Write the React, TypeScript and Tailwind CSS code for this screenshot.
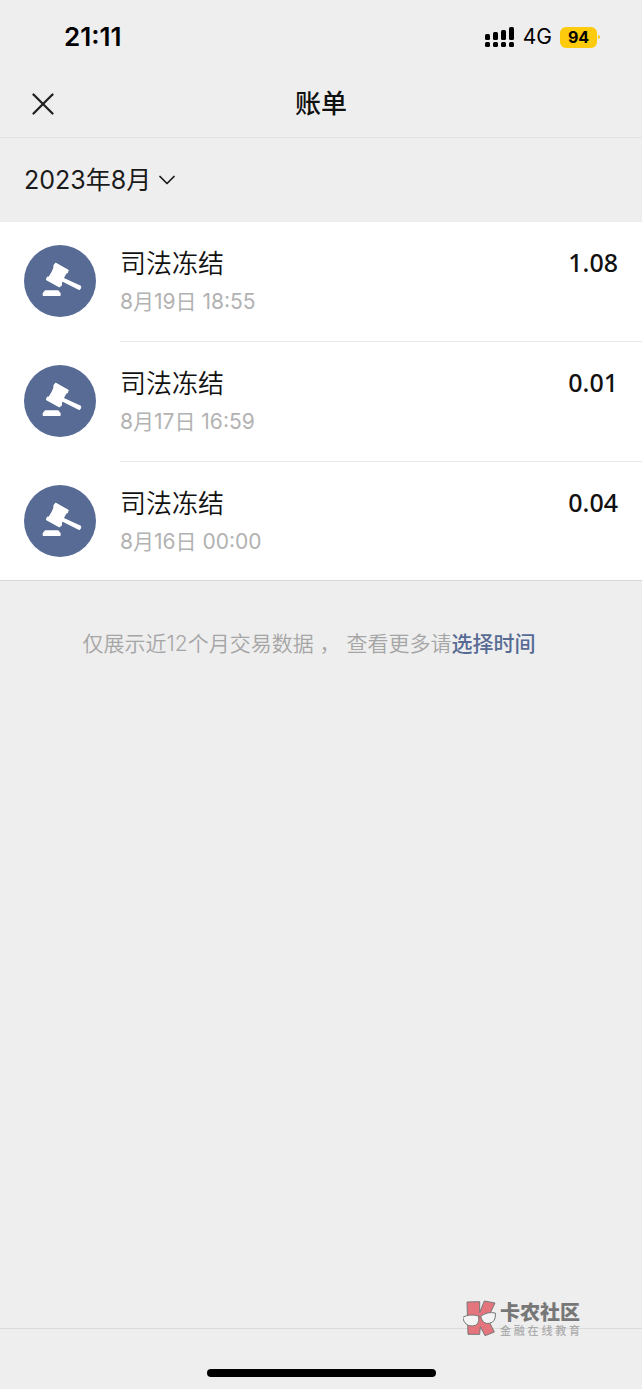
import { ChevronDown, X } from "lucide-react";

type Bill = {
  id: number;
  title: string;
  time: string;
  amount: string;
};

const bills: Bill[] = [
  { id: 1, title: "司法冻结", time: "8月19日 18:55", amount: "1.08" },
  { id: 2, title: "司法冻结", time: "8月17日 16:59", amount: "0.01" },
  { id: 3, title: "司法冻结", time: "8月16日 00:00", amount: "0.04" },
];

function SignalIcon() {
  return (
    <svg viewBox="0 0 30 20" className="h-5 w-[30px]" fill="#000" aria-hidden>
      <rect x="0" y="7" width="5" height="6" rx="1.5" />
      <rect x="8" y="5" width="5" height="8" rx="1.5" />
      <rect x="16" y="3" width="5" height="10" rx="1.5" />
      <rect x="24" y="0" width="5" height="13" rx="1.5" />
      <rect x="0" y="15" width="5" height="5" rx="1.5" />
      <rect x="8" y="15" width="5" height="5" rx="1.5" />
      <rect x="16" y="15" width="5" height="5" rx="1.5" />
      <rect x="24" y="15" width="5" height="5" rx="1.5" />
    </svg>
  );
}

function GavelIcon() {
  return (
    <svg viewBox="12 15 216 216" className="size-[72px] shrink-0" aria-hidden>
      <circle cx="120" cy="123" r="108" fill="#576b95" />
      <g fill="#fff" stroke="#fff" strokeLinejoin="round" strokeWidth="4">
        <path d="M107 70 L144 91 L142 98 L138 99 Q130 112 124 128 L124 135 L118 140 L80 119 L82 112 L88 111 Q97 98 102 84 L102 77 Z" />
        <path d="M131 116 L180 138 Q184 143 178 148 L126 122 Z" />
        <path d="M76 153 H114 L120 160 V166 H70 V160 Z" />
      </g>
    </svg>
  );
}

function StatusBar() {
  return (
    <div className="flex h-[74px] items-center justify-between pr-[42px] pl-16 text-black">
      <span className="text-[26px] leading-8 font-semibold">21:11</span>
      <div className="flex items-center">
        <SignalIcon />
        <span className="ml-2 text-[21px] leading-6">4G</span>
        <span className="ml-2 flex h-[21px] w-[37px] items-center justify-center rounded-md bg-[#fdca0c] text-base font-bold">
          94
        </span>
        <span className="ml-px h-1 w-[2px] rounded-r-full bg-[#fdca0c]" />
      </div>
    </div>
  );
}

function BillRow({ bill }: { bill: Bill }) {
  return (
    <li className="group flex h-[120px] pl-6 last:h-[118px]">
      <div className="pt-[23px]">
        <GavelIcon />
      </div>
      <div className="ml-6 flex flex-1 justify-between border-b border-[#e8e8e8] pt-[22px] pr-6 group-last:border-b-0">
        <div>
          <p className="text-[26px] leading-10 font-[350] text-[#111]">{bill.title}</p>
          <p className="mt-[2px] text-[21px] leading-8 text-[#b2b2b2]">{bill.time}</p>
        </div>
        <span className="font-['Noto_Sans',sans-serif] text-[25px] leading-9 font-medium text-[#111]">
          {bill.amount}
        </span>
      </div>
    </li>
  );
}

function Watermark() {
  return (
    <div className="absolute right-[62px] bottom-[51px] flex items-center">
      <svg viewBox="0 0 108 114" className="h-[38px] w-9" stroke="#777" strokeWidth="3" aria-hidden>
        <path
          d="M12 6 L50 5 L50 38 L64 3 L96 9 L74 56 L94 96 L66 107 L52 80 L50 103 L15 103 Z"
          fill="#e5757d"
          strokeLinejoin="round"
        />
        <path d="M-1 52 Q20 40 47 48 Q51 77 28 78 Q5 79 -1 52 Z" fill="#f4f4f4" />
        <path d="M53 49 Q73 34 97 39 Q100 66 79 70 Q59 74 53 49 Z" fill="#f4f4f4" />
        <path d="M47 51 L53 49" />
      </svg>
      <div className="ml-px">
        <p className="text-xl leading-6 font-black text-[#777]">卡农社区</p>
        <p className="flex justify-between text-[11px] leading-3 font-medium text-[#aaa]">
          {[..."金融在线教育"].map((char) => (
            <span key={char}>{char}</span>
          ))}
        </p>
      </div>
    </div>
  );
}

export default function App() {
  return (
    <div className="relative flex min-h-screen flex-col bg-[#eeeeee] font-[Inter,'Noto_Sans_CJK_SC',sans-serif]">
      <StatusBar />
      <header className="grid h-16 grid-cols-[1fr_auto_1fr] items-center border-b border-[#e2e2e2] px-6 pb-1">
        <button type="button" aria-label="关闭" className="justify-self-start text-[#222]">
          <X size={38} strokeWidth={1.5} />
        </button>
        <h1 className="text-[26px] leading-9 font-medium text-[#111]">账单</h1>
      </header>
      <div className="flex h-[84px] items-center px-6">
        <button type="button" className="flex items-center gap-[2px] text-[25px] leading-9 text-[#1a1a1a]">
          2023年8月
          <ChevronDown size={28} strokeWidth={1.5} />
        </button>
      </div>
      <main className="flex-1">
        <ul className="border-b border-[#d8d8d8] bg-white">
          {bills.map((bill) => (
            <BillRow key={bill.id} bill={bill} />
          ))}
        </ul>
        <p className="mt-[47px] pr-12 pl-6 text-center text-[21px] leading-8 font-[350] text-[#a5a5a5]">
          仅展示近12个月交易数据 ， 查看更多请
          <a href="#time" className="font-medium text-[#576b95]">
            选择时间
          </a>
        </p>
      </main>
      <footer className="flex h-[61px] items-end justify-center border-t border-[#dadada] pb-3">
        <div className="h-2 w-[229px] rounded-full bg-black" />
      </footer>
      <Watermark />
    </div>
  );
}
